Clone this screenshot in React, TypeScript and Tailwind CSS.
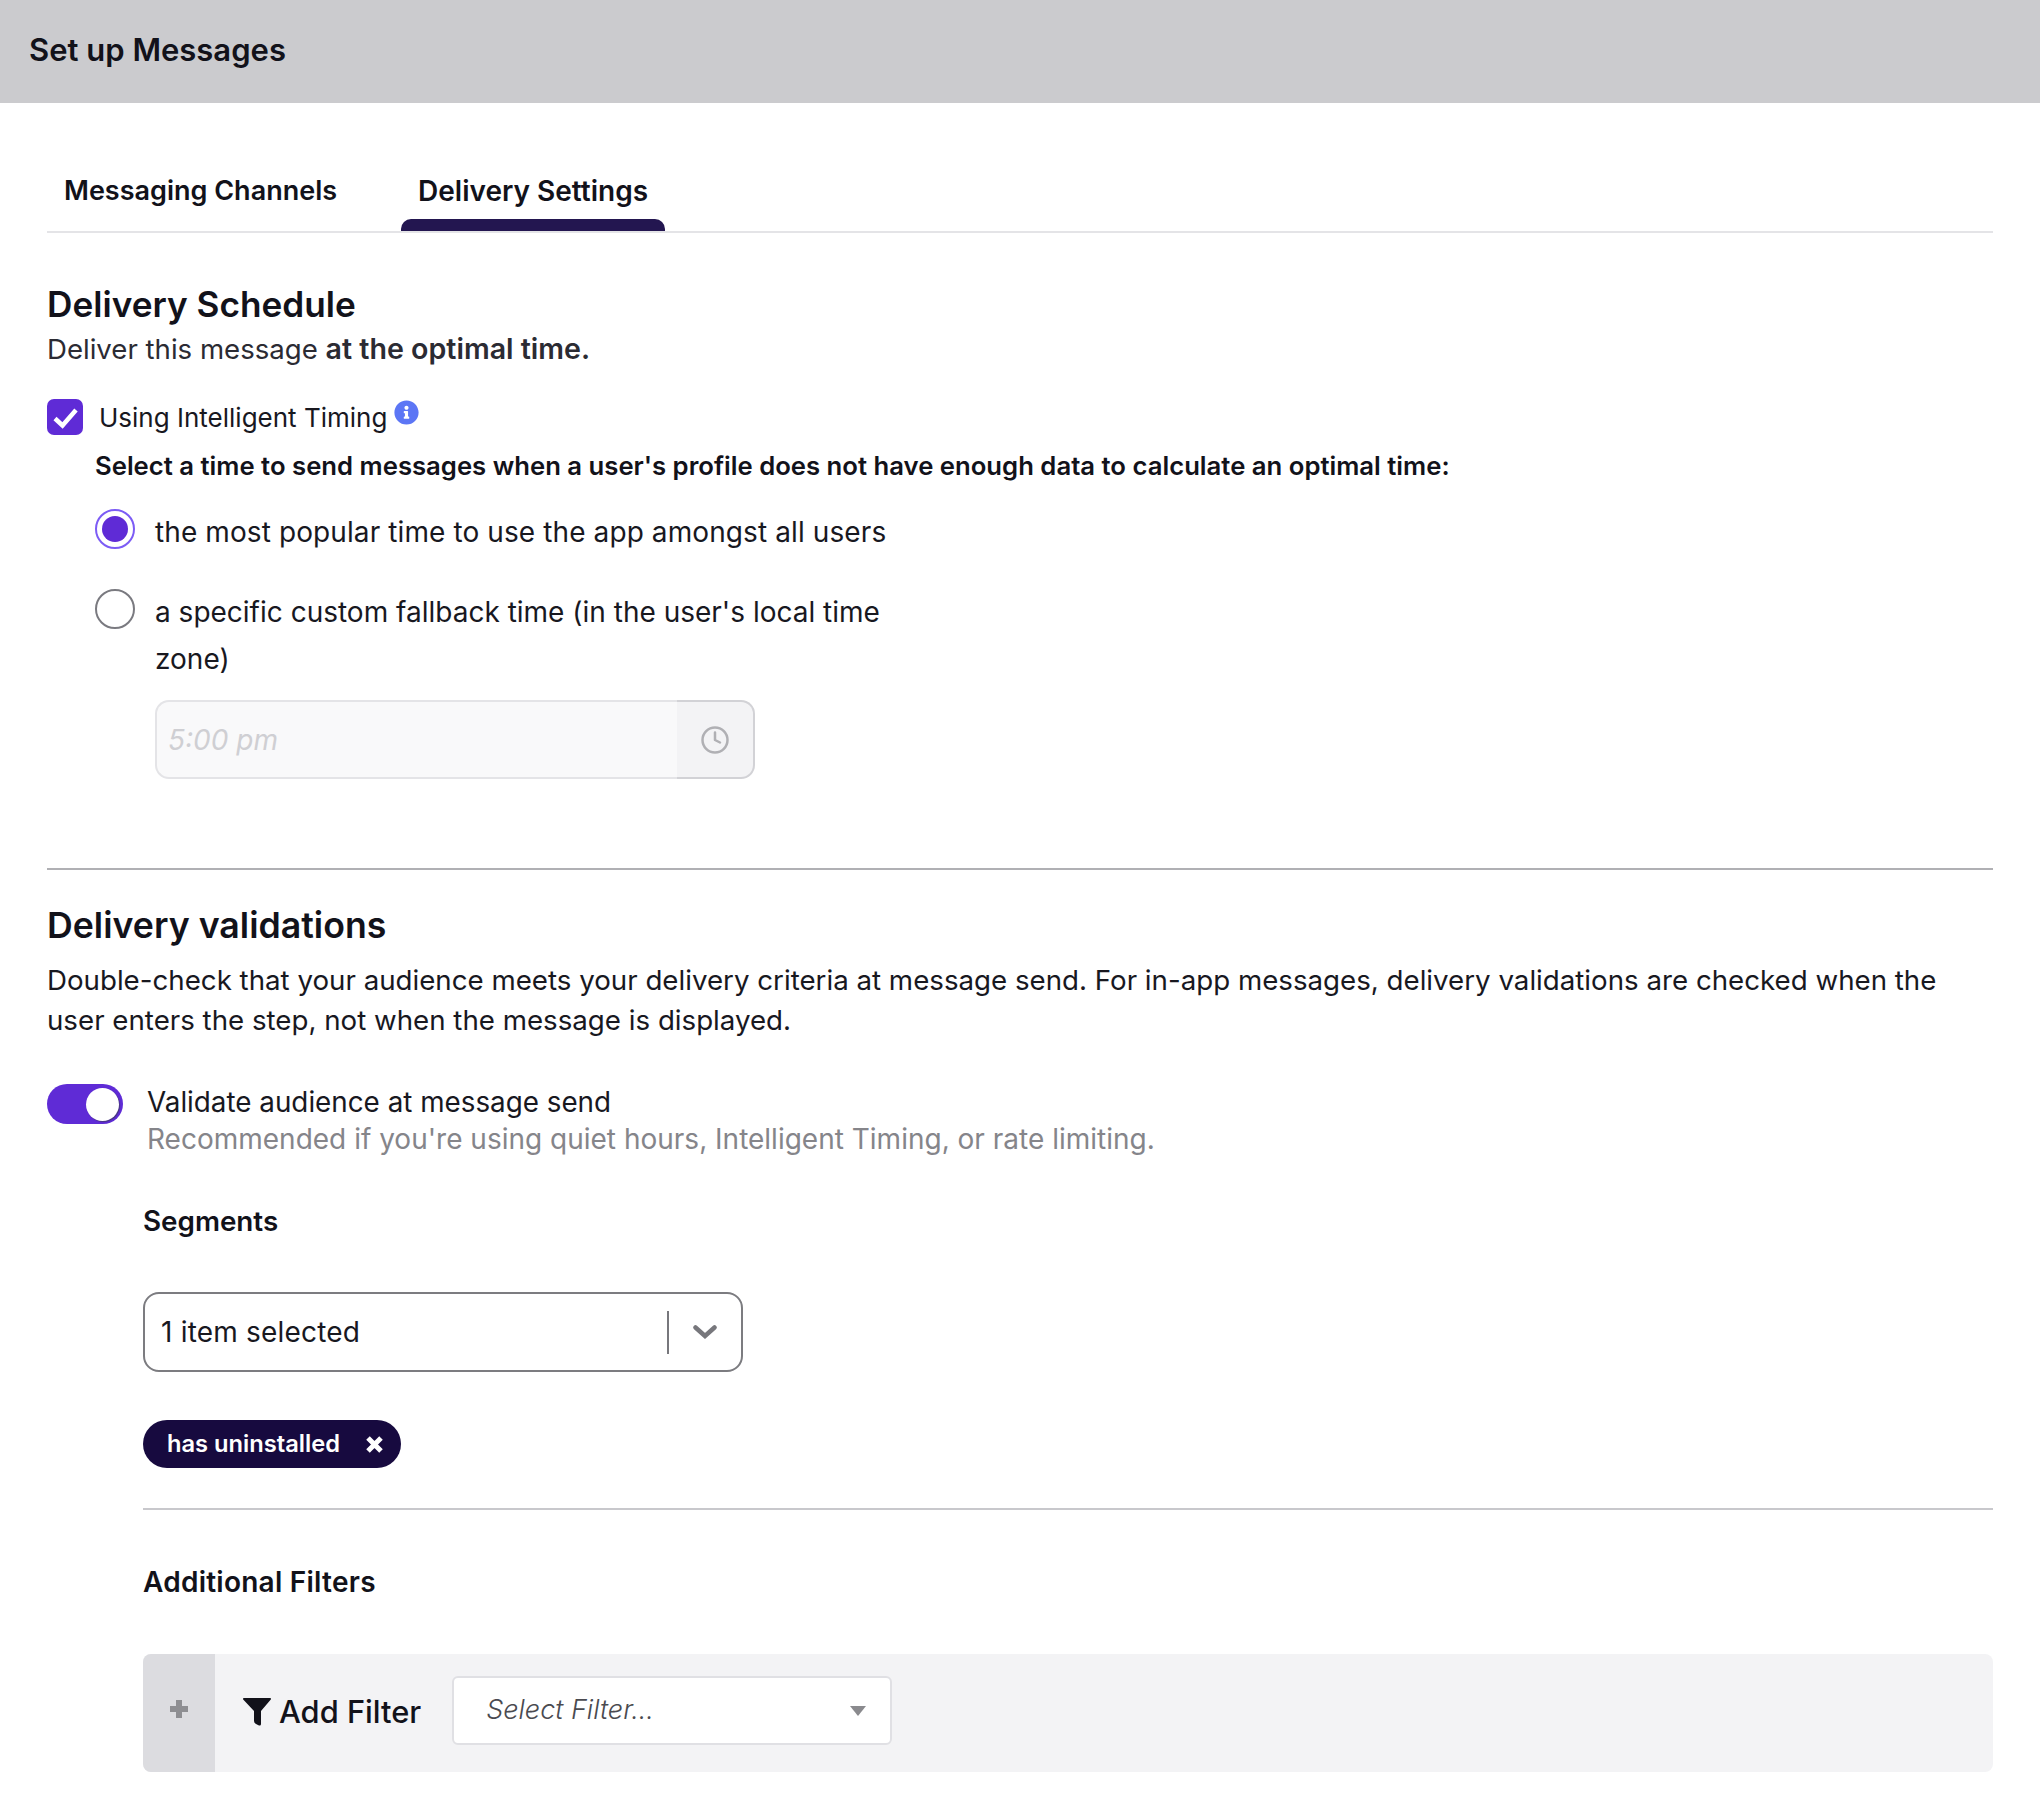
import { Clock } from "lucide-react";
import { FaInfoCircle } from "react-icons/fa";

const bold = "font-semibold text-[#12121a]";

export default function App() {
  return (
    <div className="min-h-[1816px] bg-white font-['Inter',sans-serif] text-[28px] text-[#18181f]">
      <header className="flex h-[103px] items-center bg-[#cbcbce] pb-[2px] pl-[29px]">
        <h1 className={`text-[31px] ${bold}`}>Set up Messages</h1>
      </header>

      <main className="px-[47px]">
        <div className="mt-[48px] flex gap-[47px] border-b-2 border-[#e4e4e7]">
          <div className={`flex h-[80px] items-center px-[17px] pt-[1px] text-[27px] ${bold}`}>Messaging Channels</div>
          <div className={`relative flex h-[80px] items-center px-[17px] text-[28px] ${bold}`}>
            Delivery Settings
            <span className="absolute inset-x-0 bottom-0 h-[12px] rounded-t-[10px] bg-[#231650]" />
          </div>
        </div>

        <h2 className={`mt-[49px] h-[44px] text-[35.2px] leading-[44px] ${bold}`}>Delivery Schedule</h2>
        <p className="mt-[3px] h-[40px] text-[27.6px] leading-[40px] text-[#2b2b33]">
          Deliver this message <span className="text-[28.6px] font-semibold">at the optimal time.</span>
        </p>

        <div className="mt-[30px] flex h-[36px]">
          <span className="h-[36px] w-[36px] rounded-[7px] bg-[#5f2bd6]">
            <svg viewBox="0 0 36 36" className="h-[36px] w-[36px]" fill="none" stroke="white" strokeWidth={4.5}>
              <path d="M8 19.500 15.500 26.500 29 11" />
            </svg>
          </span>
          <span className="ml-[16px] text-[26px] leading-[38px]">Using Intelligent Timing</span>
          <FaInfoCircle className="ml-[7px] mt-[1px] h-[25px] w-[25px] text-[#5c76f5]" />
        </div>

        <p className={`ml-[48px] mt-[13px] h-[36px] text-[25.7px] leading-[36px] ${bold}`}>
          Select a time to send messages when a user's profile does not have enough data to calculate an optimal time:
        </p>

        <div className="ml-[48px] mt-[25px] flex gap-[20px]">
          <span className="flex h-[40px] w-[40px] shrink-0 items-center justify-center rounded-full border-2 border-[#7c5cf5]">
            <span className="h-[26px] w-[26px] rounded-full bg-[#5f2bd6]" />
          </span>
          <span className="leading-[47px] tracking-[0.1px]">the most popular time to use the app amongst all users</span>
        </div>

        <div className="ml-[48px] mt-[33px] flex gap-[20px]">
          <span className="h-[40px] w-[40px] shrink-0 rounded-full border-2 border-[#7a7a80]" />
          <div className="w-[760px] leading-[47px]">a specific custom fallback time (in the user's local time zone)</div>
        </div>

        <div className="ml-[108px] mt-[17px] flex h-[79px] w-[600px]">
          <span className="flex-1 rounded-l-[14px] border-y-2 border-l-2 border-[#e4e4e7] bg-[#f9f9fa] pl-[11px] italic leading-[77px] text-[#cfcfd3]">
            5:00 pm
          </span>
          <span className="flex w-[78px] items-center justify-center rounded-r-[14px] border-y-2 border-r-2 border-[#d2d2d6] bg-[#f3f3f5]">
            <Clock className="h-[30px] w-[30px] text-[#b0b0b4]" strokeWidth={2} />
          </span>
        </div>

        <hr className="mt-[89px] border-t-2 border-[#b0b0b4]" />

        <h2 className={`mt-[33px] h-[44px] text-[35.7px] leading-[44px] ${bold}`}>Delivery validations</h2>
        <p className="mt-[13px] text-[27.7px] leading-[40px]">
          Double-check that your audience meets your delivery criteria at message send. For in-app messages, delivery validations are checked when the user enters the step, not when the message is displayed.
        </p>

        <div className="mt-[44px] flex">
          <span className="flex h-[40px] w-[76px] shrink-0 items-center justify-end rounded-full bg-[#5f2bd6] pr-[4px]">
            <span className="h-[33px] w-[33px] rounded-full bg-white shadow-[1px_1px_1px_rgba(60,60,90,0.7)]" />
          </span>
          <div className="ml-[24px]">
            <div className="text-[27.8px] leading-[37px]">Validate audience at message send</div>
            <div className="leading-[36px] text-[#85858a]">Recommended if you're using quiet hours, Intelligent Timing, or rate limiting.</div>
          </div>
        </div>

        <div className="pl-[96px]">
          <div className={`mt-[46px] h-[36px] text-[27.8px] leading-[36px] ${bold}`}>Segments</div>

          <div className="mt-[53px] flex h-[80px] w-[600px] items-center rounded-[16px] border-2 border-[#7c7c80] pl-[16px]">
            <span className="flex-1 tracking-[0.2px]">1 item selected</span>
            <span className="h-[43px] w-[2px] bg-[#77777c]" />
            <svg viewBox="0 0 24 14" className="mx-[24px] h-[14px] w-[24px]" fill="none" stroke="#77777c" strokeWidth={4.5} strokeLinecap="round">
              <path d="M2.500 2.500 12 11l9.500-8.500" />
            </svg>
          </div>

          <div className="mt-[48px] flex h-[48px] w-[258px] items-center rounded-full bg-[#170a3f] pl-[24px] text-[23.7px] font-semibold text-white">
            has uninstalled
            <svg viewBox="0 0 17 17" className="ml-auto mr-[18px] h-[17px] w-[17px]" stroke="white" strokeWidth={5}>
              <path d="M2 2l13 13M15 2 2 15" />
            </svg>
          </div>

          <hr className="mt-[40px] border-t-2 border-[#c8c8cc]" />

          <div className={`mt-[54px] h-[36px] leading-[36px] tracking-[0.25px] ${bold}`}>Additional Filters</div>

          <div className="mt-[54px] flex h-[118px] items-center overflow-hidden rounded-[8px] bg-[#f3f3f5]">
            <span className="flex h-full w-[72px] items-center justify-center bg-[#dcdce0]">
              <svg viewBox="0 0 18 18" className="mb-[8px] h-[18px] w-[18px] fill-[#8e8e92]">
                <path d="M6 0h6v6h6v6h-6v6H6v-6H0V6h6z" />
              </svg>
            </span>
            <svg viewBox="0 0 28 28" className="mb-[3px] ml-[28px] h-[28px] w-[28px] fill-[#12121a]">
              <path d="M1 0h26q1.500 0 .8 1.500L18 13v13q0 2-2 1.500l-3-1.500q-2-1-2-3V13L.2 1.500Q-.5 0 1 0z" />
            </svg>
            <span className="mb-[1px] ml-[8px] text-[30.8px] font-medium text-[#12121a]">Add Filter</span>
            <div className="mb-[5px] ml-[31px] flex h-[69px] w-[440px] items-center rounded-[6px] border-2 border-[#e0e0e4] bg-white pl-[32px] pr-[24px]">
              <span className="flex-1 text-[27px] font-light italic text-[#4a4a50]">Select Filter...</span>
              <svg viewBox="0 0 16 10" className="h-[10px] w-[16px] fill-[#8a8a8e]">
                <path d="M0 0h16L8 10z" />
              </svg>
            </div>
          </div>
        </div>
      </main>
    </div>
  );
}
